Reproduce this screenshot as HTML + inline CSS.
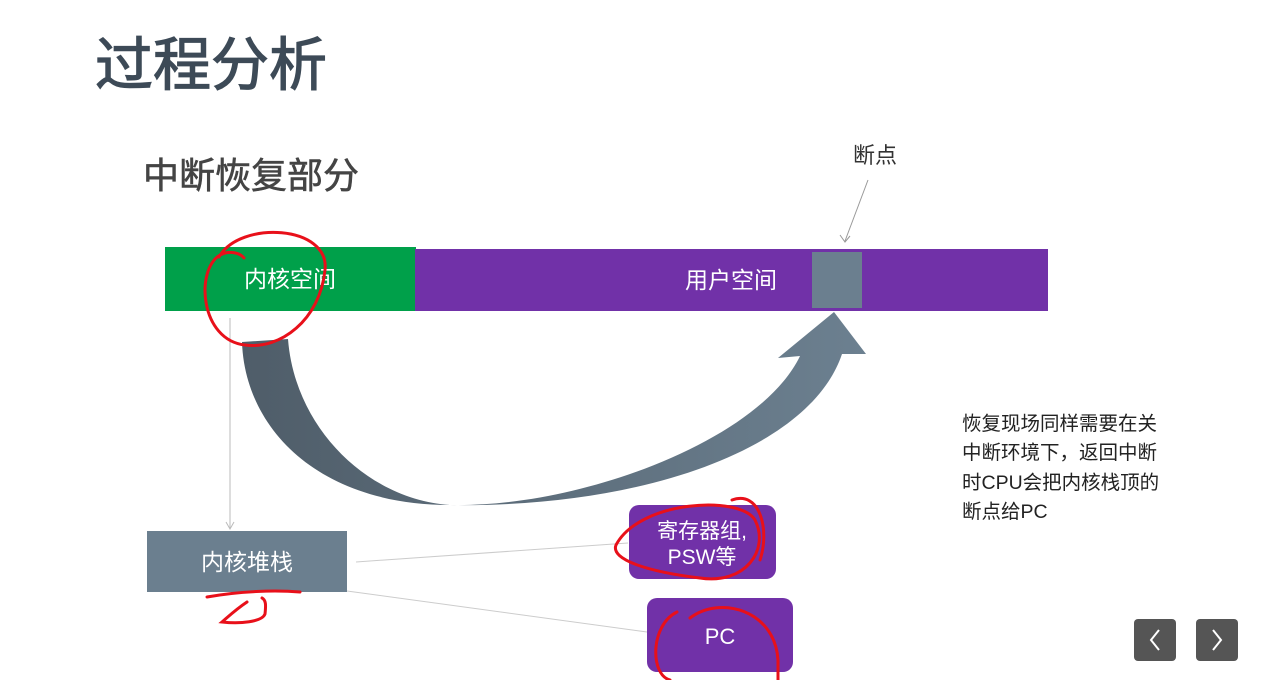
<!DOCTYPE html>
<html><head><meta charset="utf-8"><style>
html,body{margin:0;padding:0;background:#fff;width:1263px;height:680px;overflow:hidden}
svg text{font-family:"Liberation Sans","Noto Sans CJK SC",sans-serif}
</style></head><body>
<svg width="1263" height="680" viewBox="0 0 1263 680" xmlns="http://www.w3.org/2000/svg">
<defs>
<linearGradient id="g" x1="0" y1="0" x2="1" y2="0">
<stop offset="0" stop-color="#4f5d69"/><stop offset="1" stop-color="#6c8090"/>
</linearGradient>
</defs>
<text x="95" y="85" font-size="58" fill="#3d4a57" stroke="#3d4a57" stroke-width="1.2">过程分析</text>
<text x="143" y="188" font-size="36" fill="#444" stroke="#444" stroke-width="0.6">中断恢复部分</text>
<text x="853" y="163" font-size="22" fill="#333">断点</text>
<line x1="868" y1="180" x2="845" y2="241" stroke="#999" stroke-width="1"/>
<path d="M840 235 L845 242 L850 236" fill="none" stroke="#999" stroke-width="1"/>
<rect x="165" y="247" width="251" height="64" fill="#00a04a"/>
<rect x="415" y="249" width="633" height="62" fill="#7131a8"/>
<rect x="812" y="252" width="50" height="56" fill="#6b7f8f"/>
<text x="290" y="287" font-size="23" fill="#fff" text-anchor="middle">内核空间</text>
<text x="731" y="288" font-size="23" fill="#fff" text-anchor="middle">用户空间</text>
<!-- big curved arrow -->
<path d="M242 342 L288 339 C295 430 370 500 450 505 C580 508 760 440 800 356 L778 358 L834 312 L866 354 L842 354 C810 450 640 508 450 505 C320 505 245 430 242 342 Z" fill="url(#g)"/>
<line x1="230" y1="318" x2="230" y2="528" stroke="#bbb" stroke-width="1"/>
<path d="M226 522 L230 529 L234 522" fill="none" stroke="#bbb"/>
<rect x="147" y="531" width="200" height="61" fill="#6b7f8f"/>
<text x="247" y="570" font-size="23" fill="#fff" text-anchor="middle">内核堆栈</text>
<line x1="356" y1="562" x2="628" y2="543" stroke="#ccc"/>
<line x1="347" y1="591" x2="647" y2="632" stroke="#ccc"/>
<rect x="629" y="505" width="147" height="74" rx="10" fill="#7131a8"/>
<text x="702" y="538" font-size="21" fill="#fff" text-anchor="middle">寄存器组,</text>
<text x="702" y="564" font-size="21" fill="#fff" text-anchor="middle">PSW等</text>
<rect x="647" y="598" width="146" height="74" rx="10" fill="#7131a8"/>
<text x="720" y="644" font-size="22" fill="#fff" text-anchor="middle">PC</text>
<!-- red annotations -->
<g fill="none" stroke="#e8101a" stroke-width="3" stroke-linecap="round">
<path d="M219 257 C240 220 330 225 325 270 C320 320 280 350 245 345 C200 340 195 270 220 255 C230 250 240 253 244 258"/>
<path d="M616 545 C640 500 740 495 755 520 C770 550 745 585 700 578 C650 572 610 560 616 545 Z"/>
<path d="M732 500 C760 490 770 530 760 560"/>
<path d="M207 597 C240 591 275 590 300 592"/>
<path d="M247 602 C235 610 228 617 222 622 C240 624 262 622 265 614 C266 605 266 600 262 598"/>
<path d="M677 612 C650 625 650 675 670 680"/>
<path d="M690 618 C720 595 775 610 778 660 L778 680"/>
</g>
<g font-size="19.5" fill="#222">
<text x="962" y="430">恢复现场同样需要在关</text>
<text x="962" y="459">中断环境下，返回中断</text>
<text x="962" y="489">时CPU会把内核栈顶的</text>
<text x="962" y="518">断点给PC</text>
</g>
<rect x="1134" y="619" width="42" height="42" rx="4" fill="#555"/>
<rect x="1196" y="619" width="42" height="42" rx="4" fill="#555"/>
<path d="M1159 630 L1151 640 L1159 650" fill="none" stroke="#fff" stroke-width="2"/>
<path d="M1213 630 L1221 640 L1213 650" fill="none" stroke="#fff" stroke-width="2"/>
</svg>
</body></html>
